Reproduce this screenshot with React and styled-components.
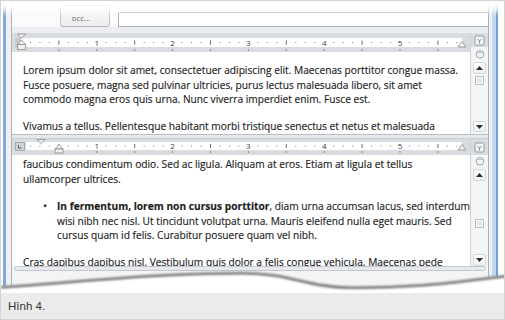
import React from 'react';
import styled, { createGlobalStyle } from 'styled-components';

const GlobalStyle = createGlobalStyle`
  html, body {
    margin: 0;
    padding: 0;
    background: #fff;
  }
  body {
    width: 505px;
    height: 320px;
    overflow: hidden;
  }
`;

const INCH = 75.8;

const Figure = styled.figure`
  margin: 0;
  width: 505px;
  height: 320px;
  box-sizing: border-box;
  border: 1px solid #d3d3d3;
  display: flex;
  flex-direction: column;
  background: #fff;
`;

const Shot = styled.div`
  position: relative;
  height: 292px;
  overflow: hidden;
  padding-left: 2px;
`;

const Window = styled.div`
  position: relative;
  box-sizing: border-box;
  width: 495px;
  height: 100%;
  display: flex;
  padding: 0 7px 0 5px;
  background: #edf1f6;
  border-left: 3px solid #7fa8d9;
  border-right: 2px solid #779fd2;
  box-shadow: inset -4px 0 0 #c3d8f0;

  &::before {
    content: '';
    position: absolute;
    left: -3px;
    right: -2px;
    top: 0;
    height: 15px;
    background: linear-gradient(#fff 0, rgba(255, 255, 255, 0.85) 7px, rgba(255, 255, 255, 0) 15px);
    z-index: 2;
  }
`;

const Inner = styled.div`
  width: 478px;
  box-sizing: border-box;
  border-left: 1px solid #a9b0b9;
  border-right: 1px solid #a9b0b9;
  display: flex;
  flex-direction: column;
  background: #fff;
`;

const Toolbar = styled.div`
  height: 26px;
  display: flex;
  align-items: flex-end;
  padding-left: 48px;
  background: #fbfbfc;
`;

const OccButton = styled.div`
  width: 50px;
  height: 22px;
  box-sizing: border-box;
  border: 1px solid #c6c6c6;
  border-bottom-color: #b5b5b5;
  border-radius: 0 0 3px 3px;
  background: linear-gradient(#fdfdfd, #ececec);
  font: 8px 'Open Sans', sans-serif;
  color: #6a6a6a;
  display: flex;
  align-items: center;
  justify-content: center;
  padding-top: 2px;
  padding-right: 8px;
`;

const Field = styled.div`
  flex: 1;
  height: 15px;
  margin-left: 8px;
  box-sizing: border-box;
  border: 1px solid #aab3bd;
  border-right: 0;
  background: #fff;
`;

const Gap = styled.div`
  height: 6px;
  background: #eceef1;
`;

const Pane = styled.div`
  height: ${(p) => p.h}px;
  display: flex;
`;

const PaneMain = styled.div`
  flex: 1;
  display: flex;
  flex-direction: column;
  min-width: 0;
`;

const RulerBar = styled.div`
  height: ${(p) => p.h}px;
  background: #d8dbdf;
  flex-shrink: 0;
  svg {
    display: block;
  }
`;

const Page = styled.div`
  flex: 1;
  overflow: hidden;
  padding: ${(p) => p.top}px 0 0 11px;
  font-family: 'Open Sans', sans-serif;
  font-size: 10.2px;
  color: #1c1c1c;
  -webkit-text-stroke: 0.15px #1c1c1c;
`;

const Para = styled.div`
  margin-bottom: ${(p) => p.mb ?? 12.4}px;
`;

const Line = styled.div`
  height: 14.6px;
  line-height: 14.6px;
  white-space: nowrap;
`;

const BulletItem = styled.div`
  display: flex;
  margin-bottom: 12.5px;
`;

const BulletDot = styled.div`
  width: 38px;
  padding-left: 20px;
  box-sizing: border-box;
  line-height: 14.6px;
  font-size: 11px;
`;

const ScrollCol = styled.div`
  width: 18px;
  box-sizing: border-box;
  border-left: 1px solid #cfd3d8;
  background: #f4f5f7;
  display: flex;
  flex-direction: column;
  align-items: center;
`;

const SplitBox = styled.div`
  align-self: stretch;
  height: ${(p) => p.h}px;
  background: #d8dbdf;
  display: flex;
  align-items: center;
  justify-content: center;
`;

const Cell = styled.div`
  height: ${(p) => p.h}px;
  margin-top: ${(p) => p.mt || 0}px;
  display: flex;
  align-items: center;
  justify-content: center;
  flex-shrink: 0;
`;

const ArrowBox = styled.div`
  width: 13px;
  height: ${(p) => p.h}px;
  margin-top: ${(p) => p.mt || 0}px;
  box-sizing: border-box;
  border: 1px solid #d4d8dd;
  border-radius: 2px;
  background: linear-gradient(#ffffff, #eef0f3);
  display: flex;
  align-items: center;
  justify-content: center;
  flex-shrink: 0;
`;

const Thumb = styled.div`
  width: 9px;
  height: 9px;
  margin-top: ${(p) => p.mt}px;
  box-sizing: border-box;
  border: 1px solid #b9bec4;
  background: #e6e8eb;
  box-shadow: inset 0 0 0 1px #fafafa;
`;

const Fill = styled.div`
  flex: 1;
`;

const SplitBar = styled.div`
  height: 5px;
  box-sizing: border-box;
  background: #e6e9ec;
  border-top: 1px solid #b8bec5;
  border-bottom: 1px solid #cdd1d6;
`;

const HScrollRow = styled.div`
  height: 5px;
  padding: 0 2px 0 2px;
  background: #f4f5f7;
`;

const HScroll = styled.div`
  height: 5px;
  box-sizing: border-box;
  border: 1px solid #c3c8ce;
  border-radius: 3px;
  background: #e7e9ec;
`;

const Status = styled.div`
  flex: 1;
  background: #f3f4f6;
`;

const Torn = styled.svg`
  position: absolute;
  left: 0;
  bottom: 0;
  z-index: 3;
`;

const Caption = styled.figcaption`
  flex: 1;
  background: #ebebeb;
  padding-left: 7px;
  font-family: 'Liberation Sans', Arial, sans-serif;
  font-size: 11.5px;
  line-height: 26px;
  color: #333;
`;

const topText = [
  [
    'Lorem ipsum dolor sit amet, consectetuer adipiscing elit. Maecenas porttitor congue massa.',
    'Fusce posuere, magna sed pulvinar ultricies, purus lectus malesuada libero, sit amet',
    'commodo magna eros quis urna. Nunc viverra imperdiet enim. Fusce est.',
  ],
  ['Vivamus a tellus. Pellentesque habitant morbi tristique senectus et netus et malesuada'],
];

function Ticks({ y, from }) {
  const marks = [];
  for (let i = 1; i <= 47; i++) {
    const x = 9 + (i * INCH) / 8;
    if (x < from || x > 447) continue;
    if (i % 8 === 0) {
      marks.push(
        <text key={i} x={x} y={y + 3} fontSize="8" fill="#3e3e3e" textAnchor="middle" fontFamily="Open Sans, sans-serif">
          {i / 8}
        </text>
      );
    } else if (i % 4 === 0) {
      marks.push(<rect key={i} x={x - 0.5} y={y - 2} width="1" height="4" fill="#6d6d6d" />);
    } else {
      marks.push(<rect key={i} x={x - 0.5} y={y - 0.5} width="1" height="1" fill="#7a7a7a" />);
    }
  }
  return marks;
}

function TabStops({ y }) {
  const marks = [];
  for (let i = 1; i <= 11; i++) {
    const x = 9 + (i * INCH) / 2;
    if (x > 447) continue;
    marks.push(<rect key={i} x={x - 0.5} y={y} width="1" height="2" fill="#8a8a8a" />);
  }
  return marks;
}

const marker = { fill: '#f1f1f1', stroke: '#8b8b8b', strokeWidth: 0.8 };

const Ruler = ({ split }) =>
  split ? (
    <RulerBar h={16}>
      <svg width="458" height="16">
        <rect x="14" y="3" width="436" height="8" fill="#fff" />
        <rect x="3.5" y="3.5" width="9" height="8" fill="#cdd0d4" stroke="#9aa0a6" strokeWidth="0.8" />
        <path d="M6.5 6 V9 H9.5" fill="none" stroke="#555" strokeWidth="0.9" />
        <Ticks y={7} from={16} />
        <TabStops y={12} />
        <polygon points="25,0.5 33,0.5 29,4.5" {...marker} />
        <polygon points="43,10 51,10 47,5.5" {...marker} />
        <rect x="43" y="10" width="8" height="4" {...marker} />
        <polygon points="446,11 454,11 450,5.5" {...marker} />
      </svg>
    </RulerBar>
  ) : (
    <RulerBar h={19}>
      <svg width="458" height="19">
        <rect x="3" y="5" width="6" height="9" fill="#c6cace" />
        <rect x="9" y="5" width="441" height="9" fill="#fff" />
        <Ticks y={9.5} from={12} />
        <TabStops y={16} />
        <polygon points="5.5,1 13.5,1 9.5,5.5" {...marker} />
        <polygon points="5.5,11.5 13.5,11.5 9.5,7" {...marker} />
        <rect x="5.5" y="11.5" width="8" height="5" {...marker} />
        <polygon points="446,14 454,14 450,8.5" {...marker} />
      </svg>
    </RulerBar>
  );

const SplitIcon = () => (
  <svg width="11" height="11" viewBox="0 0 11 11">
    <rect x="1" y="1" width="9" height="9" rx="1" fill="#f4f4f4" stroke="#8d939a" strokeWidth="0.9" />
    <path d="M3.5 4 L5.5 6 L7.5 4 M5.5 6 V8.5" fill="none" stroke="#7b8188" strokeWidth="0.9" />
  </svg>
);

const ToggleIcon = () => (
  <svg width="10" height="10" viewBox="0 0 10 10">
    <circle cx="5" cy="5.3" r="3.8" fill="#f1f2f4" stroke="#9ca2a9" strokeWidth="0.9" />
    <path d="M2 3.5 H8" stroke="#b4b9bf" strokeWidth="0.8" />
  </svg>
);

const Arrow = ({ up }) => (
  <svg width="7" height="4" viewBox="0 0 7 4">
    <polygon points={up ? '0,4 7,4 3.5,0' : '0,0 7,0 3.5,4'} fill="#2d2d2d" />
  </svg>
);

const TornEdge = () => (
  <Torn width="505" height="24" viewBox="0 0 505 24">
    <defs>
      <filter id="soft" x="-5%" y="-50%" width="110%" height="200%">
        <feGaussianBlur stdDeviation="1.2" />
      </filter>
    </defs>
    <path d="M0 17 C60 14 140 3 240 3 C290 3 305 17 350 17.5 C420 18 460 11 505 6 L505 24 L0 24 Z" fill="#fff" />
    <path
      d="M0 18.2 C60 15.2 140 4.2 240 4.2 C290 4.2 305 18.2 350 18.7 C420 19.2 460 12.2 505 7.2"
      fill="none"
      stroke="#6f6f6f"
      strokeWidth="2.6"
      filter="url(#soft)"
    />
  </Torn>
);

export default function App() {
  return (
    <>
      <GlobalStyle />
      <Figure>
        <Shot>
          <Window>
            <Inner>
              <Toolbar>
                <OccButton>occ...</OccButton>
                <Field />
              </Toolbar>
              <Gap />
              <Pane h={101}>
                <PaneMain>
                  <Ruler />
                  <Page top={11}>
                    {topText.map((para, i) => (
                      <Para key={i}>
                        {para.map((l) => (
                          <Line key={l}>{l}</Line>
                        ))}
                      </Para>
                    ))}
                  </Page>
                </PaneMain>
                <ScrollCol>
                  <SplitBox h={14}>
                    <SplitIcon />
                  </SplitBox>
                  <Cell h={11} mt={1}>
                    <ToggleIcon />
                  </Cell>
                  <ArrowBox h={12} mt={3}>
                    <Arrow up />
                  </ArrowBox>
                  <Thumb mt={2} />
                  <Fill />
                  <ArrowBox h={11} mt={0}>
                    <Arrow />
                  </ArrowBox>
                  <Cell h={2} />
                </ScrollCol>
              </Pane>
              <SplitBar />
              <Pane h={127}>
                <PaneMain>
                  <Ruler split />
                  <Page top={2}>
                    <Para mb={13}>
                      <Line>faucibus condimentum odio. Sed ac ligula. Aliquam at eros. Etiam at ligula et tellus</Line>
                      <Line>ullamcorper ultrices.</Line>
                    </Para>
                    <BulletItem>
                      <BulletDot>•</BulletDot>
                      <div>
                        <Line>
                          <b>In fermentum, lorem non cursus porttitor</b>, diam urna accumsan lacus, sed interdum
                        </Line>
                        <Line>wisi nibh nec nisl. Ut tincidunt volutpat urna. Mauris eleifend nulla eget mauris. Sed</Line>
                        <Line>cursus quam id felis. Curabitur posuere quam vel nibh.</Line>
                      </div>
                    </BulletItem>
                    <Line>Cras dapibus dapibus nisl. Vestibulum quis dolor a felis congue vehicula. Maecenas pede</Line>
                  </Page>
                </PaneMain>
                <ScrollCol>
                  <SplitBox h={16}>
                    <SplitIcon />
                  </SplitBox>
                  <Cell h={11}>
                    <ToggleIcon />
                  </Cell>
                  <ArrowBox h={12} mt={3}>
                    <Arrow up />
                  </ArrowBox>
                  <Thumb mt={38} />
                  <Fill />
                  <ArrowBox h={12}>
                    <Arrow />
                  </ArrowBox>
                </ScrollCol>
              </Pane>
              <HScrollRow>
                <HScroll />
              </HScrollRow>
              <Status />
            </Inner>
          </Window>
          <TornEdge />
        </Shot>
        <Caption>Hình 4.</Caption>
      </Figure>
    </>
  );
}
